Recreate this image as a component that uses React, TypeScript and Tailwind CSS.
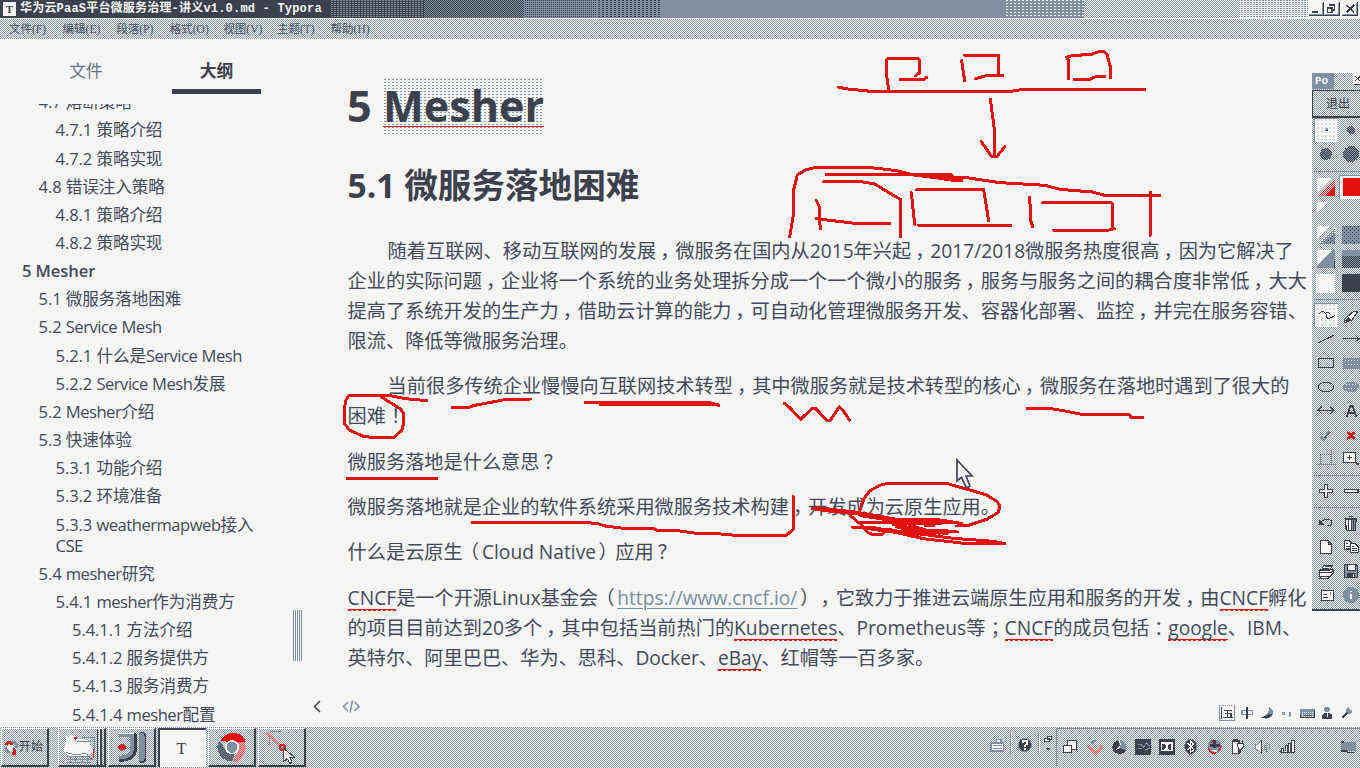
import React from "react";

const toc: { t: string; l: number }[] = [
  { t: "4.7 熔断策略", l: 2 },
  { t: "4.7.1 策略介绍", l: 3 },
  { t: "4.7.2 策略实现", l: 3 },
  { t: "4.8 错误注入策略", l: 2 },
  { t: "4.8.1 策略介绍", l: 3 },
  { t: "4.8.2 策略实现", l: 3 },
  { t: "5 Mesher", l: 1 },
  { t: "5.1 微服务落地困难", l: 2 },
  { t: "5.2 Service Mesh", l: 2 },
  { t: "5.2.1 什么是Service Mesh", l: 3 },
  { t: "5.2.2 Service Mesh发展", l: 3 },
  { t: "5.2 Mesher介绍", l: 2 },
  { t: "5.3 快速体验", l: 2 },
  { t: "5.3.1 功能介绍", l: 3 },
  { t: "5.3.2 环境准备", l: 3 },
  { t: "5.3.3 weathermapweb接入 CSE", l: 3 },
  { t: "5.4 mesher研究", l: 2 },
  { t: "5.4.1 mesher作为消费方", l: 3 },
  { t: "5.4.1.1 方法介绍", l: 4 },
  { t: "5.4.1.2 服务提供方", l: 4 },
  { t: "5.4.1.3 服务消费方", l: 4 },
  { t: "5.4.1.4 mesher配置", l: 4 },
];

const levelClass: Record<number, string> = {
  1: "pl-[22px] font-semibold",
  2: "pl-[38.5px]",
  3: "pl-[55.5px]",
  4: "pl-[72px]",
};

const dither = "bg-[repeating-conic-gradient(#8798a9_0_25%,#f5f5f3_0_50%)] bg-[length:2px_2px]";
const D = "#3d404d";
const B = "#8090a2";
const L = "#f5f5f3";
const R = "#e31212";

/* Drawing whose coordinates are thirds of a pixel */
function Z({ v, children, className = "" }: { v: [number, number, number, number]; children?: React.ReactNode; className?: string }) {
  return (
    <svg
      className={"block shrink-0 " + className}
      width={v[2] / 3}
      height={v[3] / 3}
      viewBox={v.join(" ")}
      fill="none"
      stroke={D}
      strokeWidth="3"
      shapeRendering="crispEdges"
    >
      {children}
    </svg>
  );
}

function Patterns() {
  return (
    <svg className="absolute h-0 w-0" aria-hidden="true">
      <defs>
        <pattern id="redHalf" width="6" height="6" patternUnits="userSpaceOnUse">
          <rect width="6" height="6" fill={L} />
          <rect width="3" height="3" fill={R} />
          <rect x="3" y="3" width="3" height="3" fill={R} />
        </pattern>
        <pattern id="redBlue" width="6" height="6" patternUnits="userSpaceOnUse">
          <rect width="6" height="6" fill={R} />
          <rect width="3" height="3" fill={B} />
        </pattern>
        <pattern id="darkBlue" width="6" height="6" patternUnits="userSpaceOnUse">
          <rect width="6" height="6" fill={D} />
          <rect width="3" height="3" fill={B} />
          <rect x="3" y="3" width="3" height="3" fill={B} />
        </pattern>
        <pattern id="blueDark" width="12" height="12" patternUnits="userSpaceOnUse">
          <rect width="12" height="12" fill={B} />
          <rect width="3" height="3" fill={D} />
          <rect x="6" y="6" width="3" height="3" fill={D} />
        </pattern>
        <pattern id="blueLight" width="6" height="6" patternUnits="userSpaceOnUse">
          <rect width="6" height="6" fill={B} />
          <rect width="3" height="3" fill={L} />
        </pattern>
      </defs>
    </svg>
  );
}

function Sq({ children }: { children: React.ReactNode }) {
  return (
    <span className="bg-[repeating-linear-gradient(90deg,#e31212_0_3px,#f5f5f3_3px_5px),linear-gradient(#e31212,#e31212)] bg-[length:100%_1px,100%_1px] bg-[position:0_100%,0_calc(100%-1px)] bg-no-repeat">
      {children}
    </span>
  );
}

/* Full-width punctuation: half-width glyph set towards the middle of a 1em cell */
const punct: Record<string, string> = {
  "，": "inline-block w-[1em] pl-[4px] [font-feature-settings:'halt']",
  "！": "inline-block w-[1em] pl-[5px] [font-feature-settings:'halt']",
  "？": "inline-block w-[1em] pl-[4px] [font-feature-settings:'halt']",
  "；": "inline-block w-[1em] pl-[5px] [font-feature-settings:'halt']",
  "：": "inline-block w-[1em] pl-[5px] [font-feature-settings:'halt']",
  "（": "inline-block w-[1em] pl-[7px] [font-feature-settings:'halt']",
  "）": "inline-block w-[1em] pl-[2.5px] [font-feature-settings:'halt']",
};

function Cn({ children }: { children: string }) {
  return (
    <>
      {children.split(/([，！？；：（）])/).map((s, i) => (punct[s] ? <span key={i} className={punct[s]}>{s}</span> : s))}
    </>
  );
}

function TocText({ t }: { t: string }) {
  return (
    <>
      {t.split(/([A-Za-z]+)/).map((s, i) => (/[A-Za-z]/.test(s) ? <span key={i} className="tracking-[-0.5px]">{s}</span> : s))}
    </>
  );
}

const menus = ["文件(F)", "编辑(E)", "段落(P)", "格式(O)", "视图(V)", "主题(T)", "帮助(H)"];

function TitleBar() {
  return (
    <header className="flex h-[18px] shrink-0">
      <div className="flex w-[330px] items-center bg-[#3d404d] pl-[3px]">
        <div className="flex h-[14px] w-[13px] items-center justify-center bg-[#f5f5f3] font-['Liberation_Serif',serif] text-[11px] font-bold text-[#3d404d]">T</div>
        <span className="pl-1 font-['Liberation_Mono','Noto_Sans_CJK_SC',monospace] text-[12px] leading-[18px] font-bold tracking-[0.2px] whitespace-pre text-[#f5f5f3]">
          华为云PaaS平台微服务治理-讲义v1.0.md - Typora
        </span>
      </div>
      <div className="w-[94px] bg-[conic-gradient(#8090a2_25%,#3d404d_0)] bg-[length:3px_2px]" />
      <div className="w-[100px] bg-[repeating-conic-gradient(#8090a2_0_25%,#3d404d_0_50%)] bg-[length:2px_2px]" />
      <div className="w-[72px] bg-[conic-gradient(#3d404d_25%,#8090a2_0)] bg-[length:2px_2px]" />
      <div className="w-[64px] bg-[conic-gradient(#3d404d_25%,#8090a2_0)] bg-[length:4px_2px]" />
      <div className="w-[344px] bg-[#8090a2]" />
      <div className="w-[80px] bg-[conic-gradient(#f5f5f3_25%,#8090a2_0)] bg-[length:4px_3px]" />
      <div className="w-[156px] bg-[repeating-conic-gradient(#8798a9_0_25%,#f5f5f3_0_50%)] bg-[length:2px_2px]" />
      <div className="w-[68px] bg-[conic-gradient(#8090a2_25%,#f5f5f3_0)] bg-[length:3px_2px]" />
      <div className="flex flex-1 items-start pt-[2px]">
        <Z v={[324, 6, 156, 42]}>
          <rect x="324" y="6" width="156" height="42" fill={L} stroke="none" />
          <path d="M326 46.500H369V6M372 46.500H418V6M426 46.500H472V6" />
          <path d="M328 43.500H366V9M376 43.500H414V9M430 43.500H468V9" stroke={B} />
          <path d="M336 36.500H354" strokeWidth="5" />
          <path d="M388 14.500H403V30H397M382 23.500H396V38H382Z" strokeWidth="4" />
          <path d="M440 15L462 37M462 15L440 37" strokeWidth="5" />
        </Z>
      </div>
    </header>
  );
}

function ToolCell({ children, active = false }: { children?: React.ReactNode; active?: boolean }) {
  return (
    <div className={active ? "h-6 w-6 border-t border-l border-[#8090a2] bg-[conic-gradient(#d5dade_25%,#f5f5f3_0)] bg-[length:4px_4px]" : "h-6 w-6"}>
      <div className={active ? "-mt-px -ml-px" : ""}>{children}</div>
    </div>
  );
}

function Sep() {
  return (
    <div className="flex h-2 items-center pl-[2px]">
      <div className="h-px w-full bg-[#8090a2]" />
    </div>
  );
}

function Group({ children }: { children: React.ReactNode }) {
  return <div className="grid grid-cols-[24px_24px] gap-x-px pl-[2px]">{children}</div>;
}

function DrawPanel() {
  return (
    <aside className={"absolute top-[73px] right-0 flex h-[538px] w-[48px] flex-col overflow-hidden border-b-2 border-[#3d404d] " + dither}>
      <div className="flex h-4 shrink-0">
        <div className="w-[22px] bg-[#8090a2] pl-[3px] font-['Liberation_Mono',monospace] text-[11px] leading-4 font-bold text-[#f5f5f3]">Po</div>
        <div className="flex flex-1 justify-end">
          <Z v={[459, 225, 21, 36]}>
            <rect x="459" y="225" width="21" height="36" fill={L} stroke="none" />
            <path d="M466 236L480 248M480 236L466 248M462 258.500H480" />
          </Z>
        </div>
      </div>
      <div className="mt-px flex h-[28px] w-[60px] shrink-0 items-center border border-b-2 border-[#3d404d] pl-[13px] text-[12px] whitespace-nowrap text-[#3d404d]">退出</div>
      <Group>
        <ToolCell active>
          <Z v={[342, 354, 72, 72]}><circle cx="381" cy="390" r="5" fill={B} stroke="none" /><path d="M378 390H384" stroke={D} /></Z>
        </ToolCell>
        <ToolCell>
          <Z v={[417, 354, 72, 72]}><circle cx="453" cy="390" r="12" fill="url(#darkBlue)" stroke="none" /></Z>
        </ToolCell>
        <ToolCell>
          <Z v={[342, 426, 72, 72]}><circle cx="378" cy="462" r="18" fill="url(#darkBlue)" stroke="none" /></Z>
        </ToolCell>
        <ToolCell>
          <Z v={[417, 426, 72, 72]}><circle cx="453" cy="462" r="24" fill="url(#darkBlue)" stroke="none" /></Z>
        </ToolCell>
      </Group>
      <div className="h-px" />
      <Sep />
      <Group>
        <ToolCell>
          <Z v={[342, 525, 72, 72]}>
            <path d="M351 576V534H396Z" fill={L} stroke="none" />
            <path d="M354 588L405 537V588Z" fill="url(#redHalf)" stroke="none" />
            <path d="M372 588L405 558V588Z" fill={R} stroke="none" />
          </Z>
        </ToolCell>
        <ToolCell>
          <Z v={[417, 525, 72, 72]}>
            <rect x="417" y="525" width="72" height="72" fill={L} stroke="none" />
            <path d="M418.500 597V526.500H489" stroke={B} />
            <rect x="429" y="534" width="54" height="54" fill={R} stroke="none" />
          </Z>
        </ToolCell>
        <ToolCell>
          <Z v={[342, 597, 72, 72]}><path d="M351 640V606H384Z" fill={L} stroke="none" /></Z>
        </ToolCell>
        <ToolCell />
        <ToolCell>
          <Z v={[342, 669, 72, 72]}>
            <path d="M351 720V678H390Z" fill={L} stroke="none" />
            <path d="M354 732L405 681V732Z" fill="url(#blueLight)" stroke="none" />
            <path d="M366 732L405 699V732Z" fill="url(#blueDark)" stroke="none" />
          </Z>
        </ToolCell>
        <ToolCell>
          <Z v={[417, 669, 72, 72]}><rect x="426" y="678" width="63" height="54" fill="url(#blueDark)" stroke="none" /></Z>
        </ToolCell>
        <ToolCell>
          <Z v={[342, 741, 72, 72]}>
            <path d="M351 804V750H405Z" fill={L} stroke="none" />
            <path d="M351 804V795L396 750H405V804Z" fill={B} stroke="none" />
            <path d="M403.500 783V804" />
          </Z>
        </ToolCell>
        <ToolCell>
          <Z v={[417, 741, 72, 72]}>
            <rect x="426" y="750" width="63" height="18" fill={B} stroke="none" />
            <rect x="426" y="768" width="63" height="36" fill="url(#darkBlue)" stroke="none" />
          </Z>
        </ToolCell>
        <ToolCell>
          <Z v={[342, 813, 72, 72]}><rect x="348" y="822" width="57" height="57" fill={L} stroke="none" /></Z>
        </ToolCell>
        <ToolCell>
          <Z v={[417, 813, 72, 72]}><rect x="426" y="822" width="63" height="54" fill={D} stroke="none" /></Z>
        </ToolCell>
      </Group>
      <Sep />
      <Group>
        <ToolCell active>
          <Z v={[342, 9, 72, 72]}><path d="M357 43Q366 30 373 36T380 52Q387 60 405 46M378 36L390 40" /></Z>
        </ToolCell>
        <ToolCell>
          <Z v={[417, 9, 72, 72]}><path d="M433 58L462 33H474L456 60L440 66H433Z" fill={L} /><path d="M435 62L446 52L452 60L444 66Z" fill={D} /></Z>
        </ToolCell>
        <ToolCell><Z v={[342, 81, 72, 72]}><path d="M354 129L402 106" /></Z></ToolCell>
        <ToolCell><Z v={[417, 81, 72, 72]}><path d="M429 115.500H477M465 106L477 116L465 126" /></Z></ToolCell>
        <ToolCell><Z v={[342, 153, 72, 72]}><path d="M355.500 175.500H400.500V202.500H355.500Z" strokeWidth="4" /></Z></ToolCell>
        <ToolCell><Z v={[417, 153, 72, 72]}><rect x="429" y="174" width="48" height="30" fill={B} stroke={B} /><path d="M435 181.500H474M435 193.500H474" stroke={L} strokeDasharray="3 6" /></Z></ToolCell>
        <ToolCell><Z v={[342, 225, 72, 72]}><ellipse cx="378" cy="261" rx="23" ry="14" /></Z></ToolCell>
        <ToolCell><Z v={[417, 225, 72, 72]}><ellipse cx="453" cy="261" rx="23" ry="14" fill={B} stroke={B} /><path d="M438 253.500H470M435 265.500H474" stroke={L} strokeDasharray="3 6" /></Z></ToolCell>
        <ToolCell><Z v={[342, 297, 72, 72]}><path d="M354 331.500H402M366 320L354 331L366 342M390 320L402 331L390 342" /></Z></ToolCell>
        <ToolCell><Z v={[417, 297, 72, 72]}><path d="M440 350L452 317H458L469 350M444 339H466" strokeWidth="5" /></Z></ToolCell>
        <ToolCell><Z v={[342, 369, 72, 72]}><path d="M362 411L370 418L388 396" stroke={B} strokeWidth="8" /><path d="M375 412L390 396" /></Z></ToolCell>
        <ToolCell><Z v={[417, 369, 72, 72]}><path d="M441 396L464 417M464 396L441 417" stroke={R} strokeWidth="8" /></Z></ToolCell>
        <ToolCell><Z v={[342, 441, 72, 72]}><path d="M360 463.500H393V490" strokeDasharray="3 3" /><path d="M348 492.500H408M361.500 465V492M394 450V495" stroke={B} /></Z></ToolCell>
        <ToolCell>
          <Z v={[417, 441, 72, 72]}>
            <path d="M430.500 457.500H466.500V487.500H430.500Z" fill={L} strokeWidth="4" />
            <path d="M448 465V480M441 472.500H456" /><path d="M466 486L476 494" strokeWidth="5" />
          </Z>
        </ToolCell>
      </Group>
      <Sep />
      <Group>
        <ToolCell><Z v={[342, 537, 72, 72]}><path d="M373 554H383V568H398V578H383V592H373V578H358V568H373Z" fill={L} strokeWidth="4" /></Z></ToolCell>
        <ToolCell><Z v={[417, 537, 72, 72]}><path d="M433 568H474V578H433Z" fill={L} strokeWidth="4" /></Z></ToolCell>
      </Group>
      <Sep />
      <Group>
        <ToolCell><Z v={[342, 633, 72, 72]}><path d="M363 669Q366 658 384 658Q396 660 396 670Q394 678 384 678" /><path d="M357 660V676H374Z" fill={D} stroke="none" /></Z></ToolCell>
        <ToolCell>
          <Z v={[417, 633, 72, 72]}>
            <path d="M436 657H468L466 692H439Z" fill={L} strokeWidth="4" /><path d="M452 660H465V690H452Z" fill={B} stroke="none" />
            <path d="M433 654H471M446 648H459M445 658V690M453 658V690M461 658V690" />
          </Z>
        </ToolCell>
        <ToolCell><Z v={[342, 705, 72, 72]}><path d="M361 722H386L395 732V761H361ZM385 722V733H395" fill={L} strokeWidth="4" /></Z></ToolCell>
        <ToolCell>
          <Z v={[417, 705, 72, 72]}>
            <path d="M433 722H447L455 730V748H433Z" fill={L} /><path d="M438 731H445M438 738H450M438 744H450" />
            <path d="M451 731H465L475 740V758H451Z" fill={L} /><path d="M456 740H462M456 746H471M456 752H471" />
          </Z>
        </ToolCell>
        <ToolCell>
          <Z v={[342, 777, 72, 72]}>
            <path d="M372 795H397L390 810H364ZM357 813L364 808H400V820L392 828H357ZM364 828H390L386 834H360Z" fill={L} />
            <path d="M374 800H392M370 805H388M357 818H392L400 811" />
          </Z>
        </ToolCell>
        <ToolCell>
          <Z v={[417, 777, 72, 72]}>
            <path d="M433 794H469L473 798V832H433Z" fill={B} strokeWidth="4" />
            <path d="M441 794H466V812H441Z" fill={L} /><path d="M442 820H464V832H442Z" fill={D} /><path d="M459 822V830" stroke={L} />
          </Z>
        </ToolCell>
        <ToolCell>
          <Z v={[342, 849, 72, 72]}>
            <path d="M364.500 871.500H400.500V901.500H364.500Z" fill={L} strokeWidth="4" /><path d="M370 884H380M370 893H384" /><path d="M391 876V885" stroke={B} strokeWidth="5" />
          </Z>
        </ToolCell>
        <ToolCell>
          <Z v={[417, 849, 72, 72]}>
            <circle cx="453" cy="885" r="23" fill={B} stroke={B} /><path d="M453 872V877M453 881V897" stroke={L} strokeWidth="6" />
          </Z>
        </ToolCell>
      </Group>
    </aside>
  );
}

function Ime() {
  return (
    <div className="absolute top-[703px] right-0 flex h-[24px] w-[143px] bg-[#f5f5f3]">
      <Z v={[771, 39, 429, 72]}>
        <path d="M778.500 45V92.500H824.500V45" stroke={B} />
        <path d="M784 47H820" stroke={B} strokeDasharray="3 3" />
        <path d="M785 50V88M791 60.500H816M803 60V80M795 70.500H813V80M789 81.500H819" strokeWidth="4" />
        <path d="M845.500 60.500H878V73H845.500Z" stroke={B} strokeWidth="4" /><path d="M861 52V87" strokeWidth="4" />
        <path d="M928 51Q944 62 938 76Q925 92 903 82Q926 78 928 51" fill={B} stroke="none" />
        <path d="M936 74Q924 90 903 82Q920 80 927 70Z" fill={D} stroke="none" />
        <circle cx="971" cy="70" r="4" stroke={B} /><path d="M991 65V74L987 80" stroke={B} strokeWidth="6" />
        <path d="M1022 60H1062V82H1022Z" fill="url(#blueLight)" strokeWidth="4" stroke={B} /><path d="M1022 76V83H1062V62M1032 77H1054" />
        <circle cx="1101" cy="58" r="7" fill={B} stroke={B} /><path d="M1087 87V74L1094 68H1108L1116 74V87Z" fill={D} stroke="none" /><path d="M1101 70V82" stroke={L} />
        <path d="M1146 84L1164 66" strokeWidth="8" /><path d="M1162 70L1156 60L1166 51L1170 60L1179 62L1172 72Z" fill={B} stroke="none" />
      </Z>
    </div>
  );
}

function TaskButton({ children }: { children: React.ReactNode }) {
  return <div className="h-[39px] w-[48px] shrink-0 overflow-hidden border-t border-l border-r-2 border-b-2 border-t-[#f5f5f3] border-l-[#f5f5f3] border-r-[#3d404d] border-b-[#3d404d]">{children}</div>;
}

function Taskbar() {
  return (
    <footer className={"flex h-[42px] shrink-0 items-start border-t border-[#f5f5f3] pt-px pl-px " + dither}>
      <TaskButton>
        <div className="flex h-full items-center">
          <Z v={[7, 141, 51, 51]}>
            <path d="M20 160Q20 148 34 151Q38 158 36 162" stroke={R} strokeWidth="8" />
            <path d="M34 150Q46 148 52 160L48 168" stroke={B} strokeWidth="7" />
            <path d="M19 166Q18 180 30 180" stroke={B} strokeWidth="7" />
            <path d="M32 168Q44 168 46 184L36 186" stroke={R} strokeWidth="8" />
            <circle cx="32" cy="167" r="9" fill={L} stroke="none" />
          </Z>
          <span className="text-[12px] leading-none whitespace-nowrap text-[#3d404d]">开始</span>
        </div>
      </TaskButton>
      <div className="flex gap-[2px] pl-[9px]">
        <TaskButton>
          <Z v={[177, 116, 135, 108]}>
            <path d="M198 135Q220 128 232 146Q262 140 270 160L280 186L262 196H204Q184 180 196 168Z" fill={L} stroke="none" />
            <path d="M198 132L207 140M228 150L222 142M243 140H282V184M232 153H272" stroke={B} />
            <path d="M222 144H230" stroke={R} strokeWidth="6" /><path d="M281 176V204M270 204H276" stroke={R} />
            <path d="M198 186Q222 196 250 190H262M200 198H270M200 208H282M200 217H270M210 198V217M226 202V214M246 198V217M262 190V214" stroke={B} />
            <path d="M291 116V224" /><path d="M297 116V224" stroke={L} /><path d="M303 116V224" strokeWidth="4" />
          </Z>
        </TaskButton>
        <TaskButton>
          <Z v={[327, 116, 135, 108]}>
            <path d="M358 134H404V180Q398 208 356 208" stroke={D} strokeWidth="14" strokeLinejoin="round" />
            <path d="M358 134H396V178Q392 202 356 202" stroke={B} strokeWidth="11" strokeLinejoin="round" />
            <path d="M427 136V207" stroke={D} strokeWidth="22" strokeLinecap="round" />
            <path d="M425 136V205" stroke={B} strokeWidth="17" strokeLinecap="round" />
            <ellipse cx="366" cy="171" rx="12" ry="10" fill="url(#redBlue)" stroke="none" /><path d="M355 170H378" stroke={R} strokeWidth="6" />
            <path d="M355 129H403" stroke={L} />
          </Z>
        </TaskButton>
        <div className="flex h-[39px] w-[48px] items-center justify-center border-t-2 border-l-2 border-[#3d404d] bg-[#f5f5f3] pr-[3px] font-['Liberation_Serif',serif] text-[16px] text-[#3d404d]">T</div>
        <TaskButton>
          <Z v={[627, 116, 135, 108]}>
            <path d="M660 150Q680 124 708 128Q734 134 736 158H700Z" fill={R} stroke="none" />
            <path d="M735 156Q744 192 712 214L698 214L716 178L712 156Z" fill="url(#redHalf)" stroke="none" />
            <path d="M657 150Q646 172 660 194Q672 212 696 213L704 190L680 182Z" fill="url(#darkBlue)" stroke="none" />
            <circle cx="696" cy="171" r="19" fill={B} stroke={L} strokeWidth="5" />
          </Z>
        </TaskButton>
        <TaskButton>
          <Z v={[777, 116, 135, 108]}>
            <path d="M800 127L840 166" stroke="url(#redHalf)" strokeWidth="9" /><path d="M808 124H842M808 134V166" stroke={B} />
            <circle cx="847" cy="171" r="8" stroke={R} strokeWidth="6" fill={B} />
            <path d="M850.500 174V214L861 205L870 219L876 215L868 200H882Z" fill={L} />
          </Z>
        </TaskButton>
      </div>
      <div className="flex-1" />
      <Z v={[80, 115, 207, 117]}>
        <path d="M149 130V196M233 130V196" stroke={B} /><path d="M152 130V196M236 130V196" stroke={L} />
        <path d="M108 158V150H122V158M92 160H130V184H92Z" stroke={B} strokeWidth="4" fill={L} /><path d="M98 168H126M98 176H126" stroke={B} />
        <circle cx="193" cy="166" r="20" fill={D} stroke={B} /><path d="M187 160V154H200V163L194 168V172M194 176V181" stroke={L} strokeWidth="5" />
        <path d="M260.500 139.500H274V150H260.500ZM253.500 146.500H267V156H253.500Z" fill={L} /><path d="M253 174H271L262 183Z" fill={D} stroke="none" />
      </Z>
      <div className="h-[39px] w-[304px] shrink-0 border-t border-l border-[#8090a2]">
        <Z v={[292, 118, 909, 111]}>
          <path d="M324 151.500H349.500V180H324Z" fill={L} /><path d="M312.500 166.500H334.500V188.500H312.500Z" fill={L} />
          <path d="M386 168L396 180L408 190L420 180L428 166" stroke="url(#redHalf)" strokeWidth="10" /><path d="M398 154H408M394 160H402" stroke={B} strokeWidth="6" />
          <circle cx="479" cy="172" r="21" fill={B} stroke="none" /><path d="M480 152Q462 152 458 172Q460 194 484 192Q498 190 500 180Q474 184 480 152" fill={D} stroke="none" /><path d="M478 152Q488 170 470 180" stroke={L} />
          <rect x="525" y="147" width="48" height="48" rx="3" fill={D} stroke="none" /><path d="M534 164H544L552 172L560 160L570 168M534 176H546M556 182L570 174" stroke={B} strokeWidth="4" />
          <rect x="597" y="147" width="48" height="48" fill={D} stroke="none" /><path d="M603 158H639V184H603Z" fill={L} stroke="none" /><path d="M608 163H614L618 168V174L614 180H608ZM634 163H628L624 168V174L628 180H634Z" fill={D} stroke="none" />
          <ellipse cx="693" cy="171" rx="18" ry="23" fill={D} stroke={B} /><path d="M684 160L702 180L693 188V154L702 162L684 182" stroke={L} strokeWidth="4" />
          <circle cx="765" cy="171" r="21" fill={B} stroke="none" /><path d="M746 176Q752 194 770 190M754 158L762 150M776 184L784 170" stroke={R} strokeWidth="4" /><path d="M764 152V176M752 168H782" stroke={D} strokeWidth="8" /><path d="M756 182L772 184" stroke={L} strokeWidth="5" />
          <path d="M818 154H838V192H818Z" fill={L} strokeWidth="4" /><path d="M820 148H834" /><path d="M834 160H852V170L846 178H838L834 170ZM838 152V160M848 152V160M843 178V190" fill={L} />
          <path d="M886 164H892L906 152V190L892 180H886Z" fill={L} stroke={B} /><path d="M906 152V190" /><path d="M914 162V180M921 156V186M930 160V182" stroke={B} />
          <path d="M958 186H966V182M966.500 176H972V187H966ZM976.500 168H982V187H976ZM986.500 160H992V187H986ZM996.500 153H1003V187H996Z" fill={L} />
          <path d="M1144 156H1188V184H1144Z" fill={B} stroke="none" /><path d="M1144 157H1152M1144 184H1160L1164 188H1184" strokeWidth="5" />
        </Z>
      </div>
    </footer>
  );
}

function Annotations() {
  return (
    <svg className="pointer-events-none absolute top-0 left-0" width="1360" height="768" viewBox="0 0 1360 768" fill="none" stroke={R} strokeWidth="9" strokeLinecap="round" strokeLinejoin="round" shapeRendering="crispEdges">
      <g transform="translate(780 40) scale(.33333)">
        <path d="M326 148L319 100V60L324 55H414L419 60V98L407 107M361 119H432L440 112M545 62L554 122M554 46H656V104M587 116L618 107H668M866 116V62L860 52L876 47L934 43L960 34H972L981 44L991 80V114M883 119H926L950 109H974" />
        <path d="M176 142L204 147L272 154H692L724 149H1094M631 177L643 268V345M604 305L636 351H650L674 320" />
        <path d="M29 590L41 520V450L52 405L76 390L106 382H266L350 392L400 405L560 413L660 428L795 436L840 448L938 456L974 466H1139M1111 457V586M139 403H400L520 421H546M400 405H516M430 409L540 420" />
        <path d="M130 426L150 425H244L284 432L350 472L361 478V590M109 482L119 502V550L122 566M109 536L224 550H329M394 458L404 553M410 449H611L626 542M416 556H692M749 472L753 545L758 560M788 488H994L998 492V566M821 571H984L1003 566" />
      </g>
      <g transform="translate(340 370) scale(.33333)">
        <path d="M260 92L196 86L150 77H26L17 92L13 120V160L28 180L70 199L104 203H162L186 180L191 158V130L180 116L126 82M336 113H384L404 106L490 90L572 87M736 98H1110L1136 106M782 105H1136M22 325H290" />
        <path d="M396 458H742L774 461L796 468L850 475H940L950 481L1020 483L1060 489L1130 491L1200 497H1338L1360 478V380" />
      </g>
      <g transform="translate(740 370) scale(.33333)">
        <path d="M132 99L150 114L182 148L216 115H226L262 152H270L298 111L312 125L328 150M862 115H926L980 124L1024 133H1166L1174 142H1208" />
        <path d="M360 420L370 388L390 362L420 346L444 340H620L650 349L700 363L740 375L772 395L780 410L774 428L740 448L680 468H650M338 472H400L550 506L640 516L680 521H794L760 514L640 505L540 492L470 470" />
        <path d="M216 415H250L370 430L480 450H600L664 460M332 438L356 458H640M360 460L384 488L400 494H424L440 482L420 476M370 474L430 482L510 486H652M460 464L520 474L600 490M580 468H556" />
        <path d="M360 434L480 453H610M230 416L350 429M440 480L530 496" strokeWidth="14" />
        <path d="M480 458H600M510 470L560 484L620 486" strokeWidth="16" />
      </g>
    </svg>
  );
}

const para = "flex flex-col whitespace-pre";

export default function App() {
  return (
    <div className="relative flex h-[768px] w-[1360px] flex-col overflow-hidden bg-[#f5f5f3] font-['Open_Sans','Noto_Sans_CJK_SC',sans-serif] text-[#434a5c] [text-spacing-trim:space-all]">
      <Patterns />
      <TitleBar />
      <nav className={"flex h-[21px] shrink-0 border-t border-[#f5f5f3] pl-[9px] font-['Liberation_Serif','Noto_Sans_CJK_SC',serif] text-[11.5px] leading-[20px] text-[#4a5263] " + dither}>
        {menus.map((m) => (
          <span key={m} className="w-[53.6px] whitespace-nowrap">{m}</span>
        ))}
      </nav>
      <main className="flex min-h-0 flex-1">
        <div className="flex w-[302px] shrink-0 flex-col">
          <div className="flex h-[65px] shrink-0 items-start text-[16.8px] leading-[24px]">
            <div className="w-[172px] pt-[20px] text-center text-[#66758a]">文件</div>
            <div className="h-[55px] w-[89px] border-b-[5px] border-[#3d404d] pt-[20px] text-center font-bold text-[#3d404d]">大纲</div>
          </div>
          <div className="flex min-h-0 flex-1">
            <div className="min-h-0 w-[270px] overflow-hidden">
              <div className="-mt-[16.3px]">
                {toc.map((n) => (
                  <div key={n.t} className={"py-[3.5px] text-[16.6px] leading-[21.15px] tracking-[-0.1px] " + levelClass[n.l]}>
                    {n.l === 1 ? n.t : <TocText t={n.t} />}
                  </div>
                ))}
              </div>
            </div>
            <div className="mt-[506px] ml-[23px] h-[51px] w-[9px] bg-[repeating-linear-gradient(90deg,#8090a2_0_1px,#f5f5f3_1px_2px)]" />
          </div>
        </div>
        <article className="flex min-w-0 flex-1 flex-col pl-[45.6px] text-[19.2px] leading-[30px]">
          <h1 className="mt-[39px] -ml-[0.6px] h-[56px] text-[43.2px] leading-[56px] font-bold whitespace-pre text-[#3d404d]">
            5{" "}
            <span className="inline-block h-[56px] bg-[radial-gradient(#8798a9_0.5px,#f5f5f3_0.6px)] bg-[length:4px_3px] align-top">
              <span className="block h-[49px] border-b border-[#e31212]">Mesher</span>
            </span>
          </h1>
          <h2 className="mt-[29px] h-[44px] text-[33.6px] leading-[44px] font-bold text-[#3d404d]">5.1 微服务落地困难</h2>
          <div className="mt-[29px] flex flex-col gap-[15.36px]">
            <p className={para}>
              <span className="pl-[40px]"><Cn>随着互联网、移动互联网的发展，微服务在国内从2015年兴起，2017/2018微服务热度很高，因为它解决了</Cn></span>
              <span><Cn>企业的实际问题，企业将一个系统的业务处理拆分成一个一个微小的服务，服务与服务之间的耦合度非常低，大大</Cn></span>
              <span><Cn>提高了系统开发的生产力，借助云计算的能力，可自动化管理微服务开发、容器化部署、监控，并完在服务容错、</Cn></span>
              <span>限流、降低等微服务治理。</span>
            </p>
            <p className={para}>
              <span className="pl-[40px]"><Cn>当前很多传统企业慢慢向互联网技术转型，其中微服务就是技术转型的核心，微服务在落地时遇到了很大的</Cn></span>
              <span><Cn>困难！</Cn></span>
            </p>
            <p className={para}><span><Cn>微服务落地是什么意思？</Cn></span></p>
            <p className={para}><span><Cn>微服务落地就是企业的软件系统采用微服务技术构建，开发成为云原生应用。</Cn></span></p>
            <p className={para}><span><Cn>什么是云原生（Cloud Native）应用？</Cn></span></p>
            <p className={para}>
              <span><Sq>CNCF</Sq><Cn>是一个开源Linux基金会（</Cn><a className="text-[#7b8da1] underline decoration-1 underline-offset-[3px]">https://www.cncf.io/</a><Cn>），它致力于推进云端原生应用和服务的开发，由</Cn><Sq>CNCF</Sq>孵化</span>
              <span><Cn>的项目目前达到20多个，其中包括当前热门的</Cn><Sq>Kubernetes</Sq><Cn>、Prometheus等；</Cn><Sq>CNCF</Sq><Cn>的成员包括：</Cn><Sq>google</Sq>、IBM、</span>
              <span>英特尔、阿里巴巴、华为、思科、Docker、<Sq>eBay</Sq>、红帽等一百多家。</span>
            </p>
          </div>
          <div className="-ml-[37.6px] mt-[23px] flex">
            <svg width="54" height="20" viewBox="310 696 54 20" fill="none" stroke={D} strokeWidth="1.5">
              <path d="M320 701L314.500 706.500L320 712" />
              <path d="M348 702L343.500 706.500L348 711M354.500 702L359 706.500L354.500 711M352.500 700.500L350 712.500" stroke={B} />
            </svg>
          </div>
        </article>
      </main>
      <Taskbar />
      <Ime />
      <DrawPanel />
      <Annotations />
      <svg className="pointer-events-none absolute top-[457px] left-[954px]" width="22" height="34" viewBox="642 261 66 102" fill={L} stroke={D} strokeWidth="5">
        <path d="M651 270V333L664 322L678 350Q684 355 690 348L678 318H696Z" />
      </svg>
    </div>
  );
}
